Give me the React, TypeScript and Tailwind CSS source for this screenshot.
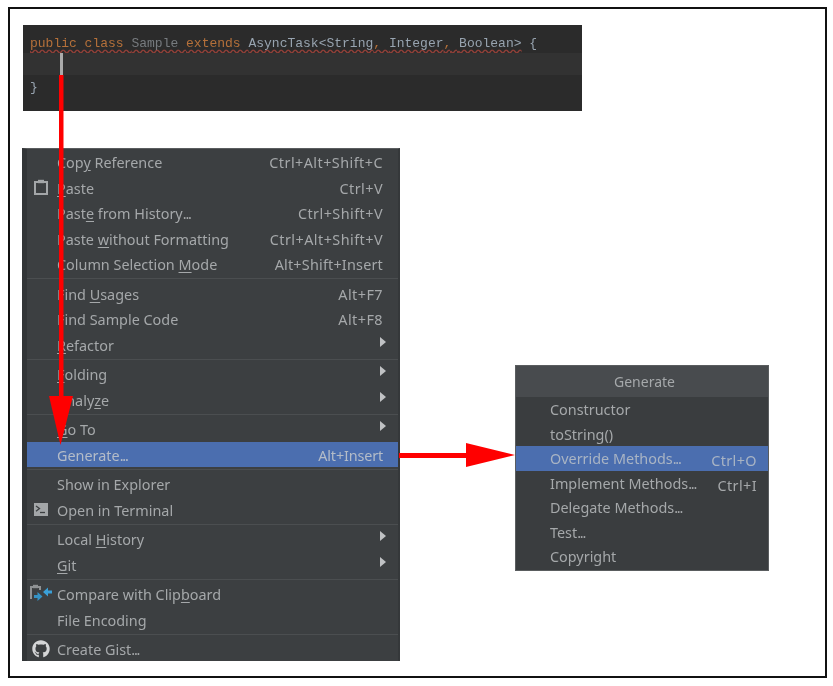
import React from "react";
import { FaGithub } from "react-icons/fa";

const ui = "font-['Noto_Sans','Open_Sans',sans-serif]";

type Item = {
  label: React.ReactNode;
  shortcut?: string;
  shortcutClass?: string;
  sub?: boolean;
  icon?: React.ReactNode;
  selected?: boolean;
};

const Dots = () => <span className="tracking-[-1.2px]">...</span>;

const Clip = () => (
  <svg width="14" height="16" viewBox="0 0 14 16" fill="none">
    <path d="M1 3h12v12H1z" stroke="#a3a6a8" strokeWidth="2" />
    <path d="M4 0.8h6v3.4H4z" fill="#a3a6a8" />
  </svg>
);
const Term = () => (
  <svg width="14" height="13" viewBox="0 0 14 13">
    <rect width="14" height="13" fill="#a3a6a8" />
    <path d="M2 3l3.5 2.6L2 8.2" fill="none" stroke="#3c3f41" strokeWidth="1.3" />
    <path d="M6 9.5h5" stroke="#3c3f41" strokeWidth="1.3" />
  </svg>
);
const Compare = () => (
  <svg width="22" height="19" viewBox="0 0 22 19" fill="none">
    <path d="M1 15V3h9v3" stroke="#8f9294" strokeWidth="2" />
    <path d="M3 0.8h5v3.4H3z" fill="#8f9294" />
    <path d="M13 8l5-4.5V6.5h4v3h-4v3z" fill="#3aa0d8" />
    <path d="M12.5 12.5L7.5 8v3H4v3h3.5v3z" fill="#3592c4" />
  </svg>
);

const groups: Item[][] = [
  [
    { label: <>Cop<u>y</u> Reference</>, shortcut: "Ctrl+Alt+Shift+C" },
    { label: <><u>P</u>aste</>, shortcut: "Ctrl+V", icon: <Clip /> },
    { label: <>Past<u>e</u> from History<Dots /></>, shortcut: "Ctrl+Shift+V" },
    { label: <>Paste <u>w</u>ithout Formatting</>, shortcut: "Ctrl+Alt+Shift+V" },
    { label: <>Column Selection <u>M</u>ode</>, shortcut: "Alt+Shift+Insert", shortcutClass: "tracking-[0.2px]" },
  ],
  [
    { label: <>Find <u>U</u>sages</>, shortcut: "Alt+F7" },
    { label: <>Find Sample Code</>, shortcut: "Alt+F8" },
    { label: <><u>R</u>efactor</>, sub: true },
  ],
  [
    { label: <><u>F</u>olding</>, sub: true },
    { label: <>Analy<u>z</u>e</>, sub: true },
  ],
  [
    { label: <><u>G</u>o To</>, sub: true },
    { label: <>Generate<Dots /></>, shortcut: "Alt+Insert", shortcutClass: "tracking-[-0.15px]", selected: true },
  ],
  [
    { label: <>Show in Explorer</> },
    { label: <>Open in Terminal</>, icon: <Term /> },
  ],
  [
    { label: <>Local <u>H</u>istory</>, sub: true },
    { label: <><u>G</u>it</>, sub: true },
  ],
  [
    { label: <>Compare with Clip<u>b</u>oard</>, icon: <Compare /> },
    { label: <>File Encoding</> },
  ],
  [{ label: <>Create Gist<Dots /></>, icon: <FaGithub size={18} color="#d5d6d7" /> }],
];

function MenuRow({ item }: { item: Item }) {
  return (
    <div
      className={`relative flex h-[25.5px] items-center justify-between pl-[30px] pr-[15px] pt-[3px] text-[14.4px] underline-offset-2 ${
        item.selected ? "bg-[#4b6eaf] text-[#b4bcc8]" : "text-[#a5a8aa]"
      }`}
    >
      {item.icon && (
        <span className="absolute left-[2px] top-0 flex h-full w-[24px] items-center justify-center">{item.icon}</span>
      )}
      <span>{item.label}</span>
      {item.shortcut && <span className={item.shortcutClass ?? "tracking-[0.45px]"}>{item.shortcut}</span>}
      {item.sub && (
        <span className="mr-[-3px] h-0 w-0 -translate-y-[4px] border-y-[5px] border-l-[6px] border-y-transparent border-l-[#c0c2c4]" />
      )}
    </div>
  );
}

const popupRows: { label: React.ReactNode; key: string; shortcut?: string; selected?: boolean }[] = [
  { key: "c", label: "Constructor" },
  { key: "t", label: "toString()" },
  { key: "o", label: <>Override Methods<Dots /></>, shortcut: "Ctrl+O", selected: true },
  { key: "i", label: <>Implement Methods<Dots /></>, shortcut: "Ctrl+I" },
  { key: "d", label: <>Delegate Methods<Dots /></> },
  { key: "e", label: <>Test<Dots /></> },
  { key: "p", label: "Copyright" },
];

export default function App() {
  return (
    <div className={`relative h-[686px] w-[833px] bg-white pl-[8px] pt-[7px] blur-[0.35px] ${ui}`}>
      <div className="flex h-[671px] w-[819px] flex-col border-2 border-[#111] pl-[12px] pt-[16px]">
        {/* code */}
        <div className="ml-px flex h-[86px] w-[559px] flex-col bg-[#2b2b2b] pt-[9px] pl-[7px] font-['Liberation_Mono',monospace] text-[13px] leading-[19px] text-[#98a4b0]">
          <div className="h-[19px] whitespace-pre">
            <span className="underline decoration-[#944038] decoration-wavy underline-offset-2">
              <span className="text-[#b5703a]">public class </span>
              <span className="text-[#777b7f]">Sample </span>
              <span className="text-[#b5703a]">extends </span>
              <span>AsyncTask&lt;String</span>
              <span className="text-[#b5703a]">, </span>
              <span>Integer</span>
              <span className="text-[#b5703a]">, </span>
              <span>Boolean&gt;</span>
            </span>
            <span> {"{"}</span>
          </div>
          <div className="relative -ml-[7px] h-[22px] bg-[#323232]">
            <div className="absolute left-[37px] top-0 h-[22px] w-[3px] bg-[#aaaaaa]" />
          </div>
          <div className="mt-[3px]">{"}"}</div>
        </div>

        <div className="mt-[37px] flex items-start">
          {/* context menu */}
          <div className="flex h-[513px] w-[378px] flex-col border-t border-r-2 border-l-[5px] border-t-[#5a5d5f] border-r-[#35383a] border-l-[#323537] bg-[#3c3f41]">
            {groups.map((g, i) => (
              <div key={i} className={i > 0 ? "mt-[1.5px] border-t border-[#4b4e50] pt-[1.5px]" : ""}>
                {g.map((it, j) => (
                  <MenuRow key={j} item={it} />
                ))}
              </div>
            ))}
          </div>

          {/* generate popup */}
          <div className="ml-[115px] mt-[217px] flex h-[206px] w-[254px] flex-col border border-[#5a5d5f] bg-[#3a3d3f] text-[14.4px] text-[#a5a8aa]">
            <div className="flex h-[31px] items-center justify-center bg-[#484b4e] pl-[5px] text-[14px]">Generate</div>
            <div>
              {popupRows.map((r) => (
                <div
                  key={r.key}
                  className={`flex h-[24.5px] items-center justify-between pl-[34px] pr-[11px] pt-[2px] ${
                    r.selected ? "bg-[#4b6eaf] text-[#a9b4c4]" : ""
                  }`}
                >
                  <span>{r.label}</span>
                  {r.shortcut && <span className="translate-y-[2px] tracking-[0.4px]">{r.shortcut}</span>}
                </div>
              ))}
            </div>
          </div>
        </div>
      </div>

      {/* annotation arrows */}
      <svg className="absolute left-0 top-0" width="833" height="686" viewBox="0 0 833 686">
        <rect x="59" y="75" width="4.5" height="322" fill="#ff0000" />
        <path d="M49 396H73L60.5 445z" fill="#ff0000" />
        <rect x="399" y="453" width="68" height="5" fill="#ff0000" />
        <path d="M466 443V467L515 455z" fill="#ff0000" />
      </svg>
    </div>
  );
}
